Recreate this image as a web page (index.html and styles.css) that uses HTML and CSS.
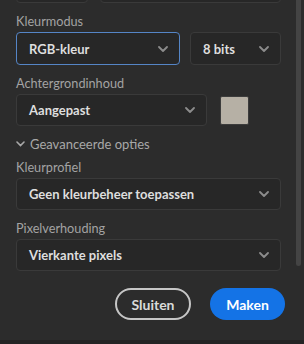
FILE: index.html
```html
<!DOCTYPE html>
<html lang="nl">
<head>
    <meta charset="UTF-8">
    <meta name="viewport" content="width=device-width, initial-scale=1.0">
    <title>Nieuw document</title>
    <link rel="stylesheet" href="styles.css">
</head>
<body>
    <div id="panel">
        <div class="row row-top">
            <div class="field f-small"></div>
            <div class="field f-grow"></div>
        </div>

        <div class="label">Kleurmodus</div>
        <div class="row">
            <div class="field f-grow focus">
                <span>RGB-kleur</span>
                <svg class="chev" width="10" height="6" viewBox="0 0 10 6"><polyline points="1,1 5,5 9,1"/></svg>
            </div>
            <div class="field f-bits">
                <span>8 bits</span>
                <svg class="chev" width="10" height="6" viewBox="0 0 10 6"><polyline points="1,1 5,5 9,1"/></svg>
            </div>
        </div>

        <div class="label">Achtergrondinhoud</div>
        <div class="row row-bg">
            <div class="field f-bg">
                <span>Aangepast</span>
                <svg class="chev" width="10" height="6" viewBox="0 0 10 6"><polyline points="1,1 5,5 9,1"/></svg>
            </div>
            <div class="swatch"></div>
        </div>

        <div class="toggle">
            <svg width="9" height="6" viewBox="0 0 9 6"><polyline points="1,1 4.5,4.5 8,1"/></svg>
            <span>Geavanceerde opties</span>
        </div>

        <div class="label label-tight">Kleurprofiel</div>
        <div class="field">
            <span>Geen kleurbeheer toepassen</span>
            <svg class="chev" width="10" height="6" viewBox="0 0 10 6"><polyline points="1,1 5,5 9,1"/></svg>
        </div>

        <div class="label label-last">Pixelverhouding</div>
        <div class="field">
            <span>Vierkante pixels</span>
            <svg class="chev" width="10" height="6" viewBox="0 0 10 6"><polyline points="1,1 5,5 9,1"/></svg>
        </div>

        <div class="buttons">
            <button class="btn btn-close">Sluiten</button>
            <button class="btn btn-make">Maken</button>
        </div>
    </div>
    <div class="scroll-thumb"></div>
    <div class="footer-line"></div>
</body>
</html>
```

FILE: styles.css
```css
html, body {
    margin: 0;
    height: 100%;
}
body {
    background: #2c2c2c;
    font-family: Lato, "Liberation Sans", sans-serif;
    overflow: hidden;
}
#panel {
    width: 265px;
    padding-left: 16px;
}
.row {
    display: flex;
    gap: 10px;
}
.row-top {
    margin-top: -29px;
    gap: 12px;
}
.row-bg {
    gap: 13px;
    align-items: center;
}
.label {
    margin: 10px 0 3px;
    font-size: 12.7px;
    line-height: 16px;
    color: #a3a3a3;
}
.label-tight {
    margin-top: 6px;
}
.label-last {
    margin-top: 10px;
}
.field {
    box-sizing: border-box;
    height: 32px;
    display: flex;
    align-items: center;
    justify-content: space-between;
    padding: 0 11px 0 12px;
    background: #272727;
    border: 1px solid #3a3a3a;
    border-radius: 4px;
    font-size: 13px;
    font-weight: 700;
    color: #dedede;
}
.field.focus {
    border-color: #5585c6;
    height: 33px;
}
.f-small {
    width: 72px;
    flex: none;
}
.f-grow {
    flex: 1;
}
.f-bits {
    width: 91px;
    flex: none;
    height: 33px;
}
.f-bg {
    width: 191px;
    flex: none;
}
.chev {
    fill: none;
    stroke: #8c8c8c;
    stroke-width: 1.8;
    stroke-linecap: round;
    stroke-linejoin: round;
}
.swatch {
    box-sizing: border-box;
    width: 29px;
    height: 29px;
    background: #b6b0a5;
    border: 1px solid #3c3c3c;
    border-radius: 2px;
}
.toggle {
    display: flex;
    align-items: center;
    gap: 5px;
    margin-top: 9px;
    height: 18px;
    font-size: 13px;
    color: #a8a8a8;
}
.toggle svg {
    fill: none;
    stroke: #a8a8a8;
    stroke-width: 1.6;
    stroke-linecap: round;
}
.buttons {
    display: flex;
    justify-content: flex-end;
    gap: 19px;
    margin-top: 17px;
    margin-right: -4px;
}
.btn {
    box-sizing: border-box;
    height: 32px;
    border-radius: 16px;
    font-family: Lato, "Liberation Sans", sans-serif;
    font-size: 14px;
    font-weight: 700;
    padding: 0;
}
.btn-close {
    width: 76px;
    background: transparent;
    border: 2px solid #c6c6c6;
    color: #dadada;
}
.btn-make {
    width: 75px;
    background: #1473e6;
    border: none;
    color: #fff;
}
.scroll-thumb {
    position: absolute;
    left: 296px;
    top: 0;
    width: 5px;
    height: 266px;
    background: #444;
    border-radius: 0 0 3px 3px;
}
.footer-line {
    position: absolute;
    left: 0;
    right: 0;
    bottom: 0;
    height: 4px;
    background: #242424;
}
```
